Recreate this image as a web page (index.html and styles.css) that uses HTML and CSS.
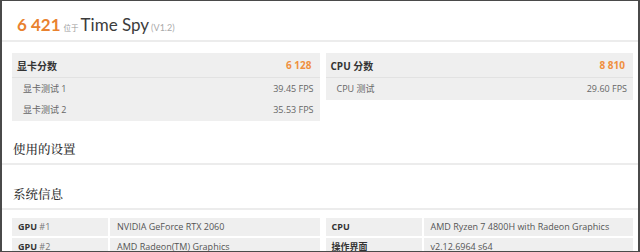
FILE: index.html
```html
<!DOCTYPE html>
<html lang="zh">
<head>
<meta charset="utf-8">
<link rel="stylesheet" href="styles.css">
</head>
<body>
<div class="frame">
  <header class="title-bar">
    <span class="score-big">6 421</span>
    <span class="at">位于</span>
    <span class="test-name">Time Spy</span>
    <span class="ver">(V1.2)</span>
  </header>

  <section class="panels">
    <div class="panel">
      <div class="panel-head"><span class="ph-label">显卡分数</span><span class="ph-score">6 128</span></div>
      <div class="panel-row"><span>显卡测试 1</span><span>39.45 FPS</span></div>
      <div class="panel-row"><span>显卡测试 2</span><span>35.53 FPS</span></div>
    </div>
    <div class="panel">
      <div class="panel-head"><span class="ph-label">CPU 分数</span><span class="ph-score">8 810</span></div>
      <div class="panel-row"><span>CPU 测试</span><span>29.60 FPS</span></div>
    </div>
  </section>

  <h2 class="sec-title">使用的设置</h2>
  <h2 class="sec-title">系统信息</h2>

  <section class="info">
    <div class="info-table">
      <div class="cell label"><b>GPU</b> #1</div>
      <div class="cell value">NVIDIA GeForce RTX 2060</div>
      <div class="cell label"><b>GPU</b> #2</div>
      <div class="cell value">AMD Radeon(TM) Graphics</div>
    </div>
    <div class="info-table">
      <div class="cell label"><b>CPU</b></div>
      <div class="cell value">AMD Ryzen 7 4800H with Radeon Graphics</div>
      <div class="cell label"><b>操作界面</b></div>
      <div class="cell value">v2.12.6964 s64</div>
    </div>
  </section>
</div>
</body>
</html>
```

FILE: styles.css
```css
html, body {
  margin: 0;
  padding: 0;
  background: #fff;
}
.frame {
  width: 640px;
  height: 252px;
  box-sizing: border-box;
  border: 1px solid #4a4a4a;
  border-left-width: 2px;
  border-right-width: 2px;
  overflow: hidden;
  font-family: "Open Sans", "Noto Sans CJK SC", sans-serif;
  color: #444;
}
.title-bar {
  display: flex;
  align-items: baseline;
  height: 41px;
  box-sizing: border-box;
  padding: 13px 0 0 15px;
  border-bottom: 2px solid #ececec;
  font-family: Lato, "Noto Sans CJK SC", sans-serif;
  line-height: 22px;
}
.score-big {
  font-size: 17px;
  font-weight: 700;
  color: #e9822f;
}
.at {
  font-family: "Noto Sans CJK SC", sans-serif;
  font-size: 7.5px;
  color: #999;
  margin-left: 3px;
}
.test-name {
  font-size: 17px;
  color: #3c3c3c;
  margin-left: 2px;
}
.ver {
  font-size: 9px;
  color: #aaa;
  margin-left: 2px;
}
.panels {
  display: grid;
  grid-template-columns: 1fr 1fr;
  gap: 6px;
  align-items: start;
  margin: 11px 5px 0 10px;
}
.panel {
  background: #efefef;
  padding-bottom: 1px;
}
.panel-head {
  display: flex;
  justify-content: space-between;
  align-items: center;
  height: 24px;
  padding: 0 8px 0 5px;
  border-bottom: 1px solid #e2e2e2;
  font-size: 10px;
}
.ph-label {
  font-weight: 700;
  color: #333;
}
.ph-score {
  font-weight: 700;
  color: #ef9040;
}
.panel-row {
  display: flex;
  justify-content: space-between;
  align-items: center;
  height: 21px;
  padding: 0 6px 0 11px;
  font-size: 9px;
  color: #666;
}
.sec-title {
  margin: 0;
  padding: 18px 0 0 11px;
  height: 24px;
  border-bottom: 2px solid #ececec;
  font-family: "Noto Serif CJK SC", "Noto Sans CJK SC", serif;
  font-size: 12.5px;
  line-height: 20px;
  font-weight: 500;
  color: #333;
}
.sec-title + .sec-title {
  padding-top: 19px;
}
.info {
  display: grid;
  grid-template-columns: 1fr 1fr;
  gap: 6px;
  margin: 8px 5px 0 10px;
}
.info-table {
  display: grid;
  grid-template-columns: 96px 1fr;
  gap: 2px;
}
.cell {
  background: #efefef;
  height: 18px;
  line-height: 18px;
  font-size: 9px;
  white-space: nowrap;
  overflow: hidden;
}
.label {
  padding-left: 6px;
  color: #777;
}
.label b {
  color: #333;
}
.value {
  padding-left: 7px;
  color: #555;
}
```
